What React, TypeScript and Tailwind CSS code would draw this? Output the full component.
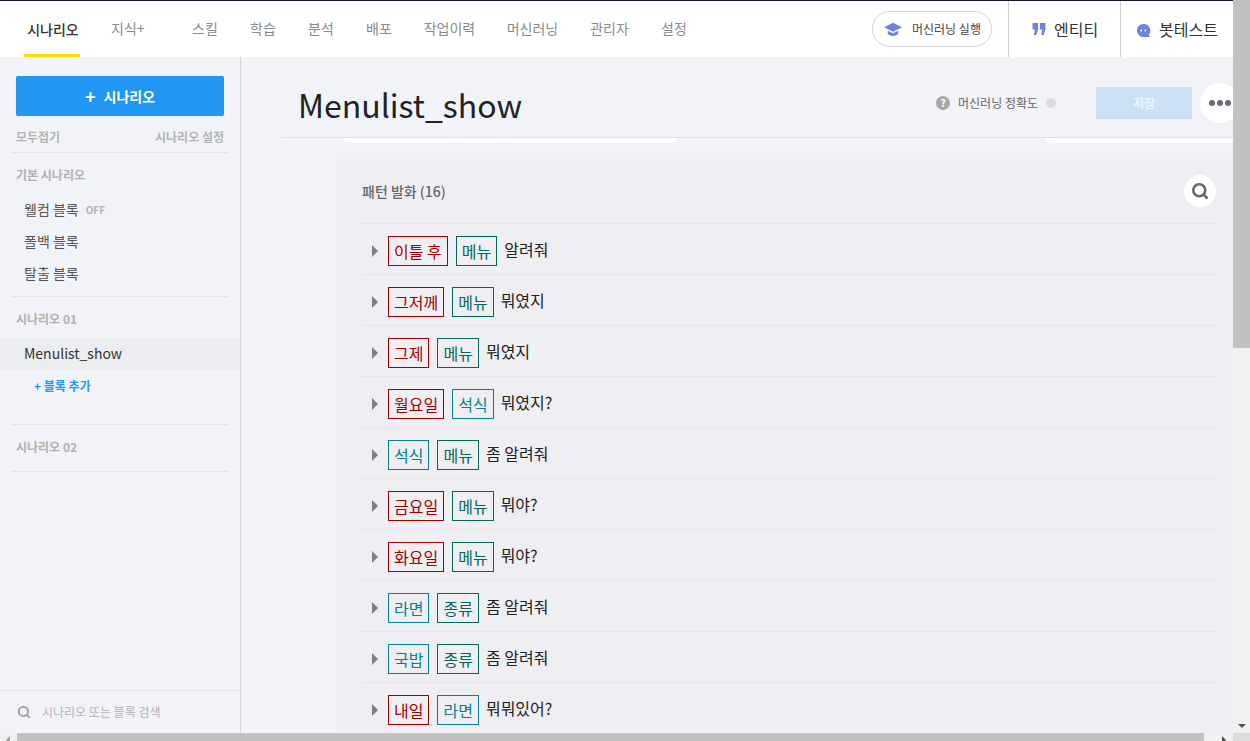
import React from 'react';
import { Search } from 'lucide-react';

const FONT = "font-['Noto_Sans_CJK_KR','Noto_Sans',sans-serif]";

const NAV = [
  { label: '스킬', w: 'w-[58px]' },
  { label: '학습', w: 'w-[58px]' },
  { label: '분석', w: 'w-[58px]' },
  { label: '배포', w: 'w-[58px]' },
  { label: '작업이력', w: 'w-[83px]' },
  { label: '머신러닝', w: 'w-[83px]' },
  { label: '관리자', w: 'w-[71px]' },
  { label: '설정', w: 'w-[58px]' },
];

const RED = 'border-[#a00000] text-[#a00000]';
const GREEN = 'border-[#00695c] text-[#00695c]';
const CYAN = 'border-[#00838f] text-[#00838f]';

type Chip = { text: string; cls: string };

const ROWS: { chips: Chip[]; tail: string }[] = [
  { chips: [{ text: '이틀 후', cls: RED }, { text: '메뉴', cls: GREEN }], tail: '알려줘' },
  { chips: [{ text: '그저께', cls: RED }, { text: '메뉴', cls: GREEN }], tail: '뭐였지' },
  { chips: [{ text: '그제', cls: RED }, { text: '메뉴', cls: GREEN }], tail: '뭐였지' },
  { chips: [{ text: '월요일', cls: RED }, { text: '석식', cls: CYAN }], tail: '뭐였지?' },
  { chips: [{ text: '석식', cls: CYAN }, { text: '메뉴', cls: GREEN }], tail: '좀 알려줘' },
  { chips: [{ text: '금요일', cls: RED }, { text: '메뉴', cls: GREEN }], tail: '뭐야?' },
  { chips: [{ text: '화요일', cls: RED }, { text: '메뉴', cls: GREEN }], tail: '뭐야?' },
  { chips: [{ text: '라면', cls: CYAN }, { text: '종류', cls: GREEN }], tail: '좀 알려줘' },
  { chips: [{ text: '국밥', cls: CYAN }, { text: '종류', cls: GREEN }], tail: '좀 알려줘' },
  { chips: [{ text: '내일', cls: RED }, { text: '라면', cls: CYAN }], tail: '뭐뭐있어?' },
];

const TopBar: React.FC = () => (
  <header className="h-[57px] shrink-0 bg-white border-t border-[#14142a] flex items-stretch">
    <div className="flex items-stretch pl-6">
      <div className="w-[56px] flex items-center justify-center border-b-[3px] border-[#ffdc00] pt-[3px] pl-[2px] text-[14px] font-medium text-[#333333]">시나리오</div>
      <div className="w-[40px] ml-[31px] flex items-center pb-[1px] text-[14px] text-[#8a8a8a]">지식+</div>
    </div>
    <nav className="flex items-center ml-[25px] pb-[1px] text-[14px] text-[#8a8a8a]">
      {NAV.map((item) => (
        <div key={item.label} className={`${item.w} text-center`}>{item.label}</div>
      ))}
    </nav>
    <div className="ml-auto flex items-stretch">
      <div className="flex items-center mr-4">
        <div className="w-[120px] h-[36px] rounded-full border border-[#d4d4d4] flex items-center pl-[11px] gap-[10px] text-[12px] text-[#444444]">
          <svg viewBox="0 0 24 20" className="w-[18px] h-[15px]" fill="#6f82de">
            <path d="M12 1 0 7l12 6 12-6z" />
            <path d="M5 11.5V15c0 1.8 3.2 3.5 7 3.5s7-1.7 7-3.5v-3.500l-7 3.500z" />
          </svg>
          머신러닝 실행
        </div>
      </div>
      <div className="w-[112px] border-l border-[#d0d0d0] flex items-center pl-[23px] gap-2 text-[16px] text-[#333333]">
        <svg viewBox="0 0 14 13" className="w-[14px] h-[12px]" fill="#6f82de">
          <path d="M0 0h6v7l-2 6H1.500L2.500 7H0zM8 0h6v7l-2 6H9.500l1-6H8z" />
        </svg>
        엔티티
      </div>
      <div className="w-[113px] border-l border-[#d0d0d0] flex items-center pl-[15px] gap-2 text-[16px] text-[#333333]">
        <svg viewBox="0 0 16 16" className="w-[15px] h-[15px] mt-[2px]">
          <path d="M8 1a7 7 0 1 0 0 14h7l-1.400-2.400A7 7 0 0 0 8 1z" fill="#6f82de" />
          <circle cx="5.500" cy="8" r="1" fill="#fff" />
          <circle cx="10" cy="8" r="1" fill="#fff" />
        </svg>
        봇테스트
      </div>
    </div>
  </header>
);

const SidebarItem: React.FC<{ children: React.ReactNode }> = ({ children }) => (
  <div className="h-8 pl-6 flex items-center text-[14px] text-[#555555]">{children}</div>
);

const SidebarHeading: React.FC<{ children: React.ReactNode }> = ({ children }) => (
  <div className="pl-4 mt-[12px] text-[12px] font-bold text-[#b0b0b0] leading-[20px]">{children}</div>
);

export default function App() {
  return (
    <div className={`${FONT} h-screen w-full overflow-hidden flex flex-col bg-[#f2f3f8]`}>
      <div className="flex-1 min-h-0 flex">
        <div className="flex-1 min-w-0 flex flex-col overflow-hidden">
          <TopBar />
          <div className="flex-1 min-h-0 flex">
            <aside className="w-[241px] shrink-0 border-r border-[#d5d6dc] flex flex-col">
              <div className="flex-1 min-h-0">
                <div className="px-4 pt-[19px]">
                  <button className="w-full h-10 rounded-[2px] bg-[#2196f3] text-white text-[14px] font-bold flex items-center justify-center gap-2">
                    <span className="text-[18px] font-bold leading-none">+</span>시나리오
                  </button>
                  <div className="flex justify-between mt-[11px] text-[12px] text-[#b4b4b4] font-bold leading-[20px]">
                    <span>모두접기</span>
                    <span>시나리오 설정</span>
                  </div>
                </div>
                <div className="mx-3 mt-[5px] border-b border-[#e3e4ea]" />
                <SidebarHeading>기본 시나리오</SidebarHeading>
                <div className="mt-[8px]">
                  <SidebarItem>
                    웰컴 블록<span className="ml-[7px] text-[10px] font-bold text-[#b4b4b4]">OFF</span>
                  </SidebarItem>
                  <SidebarItem>폴백 블록</SidebarItem>
                  <SidebarItem>탈출 블록</SidebarItem>
                </div>
                <div className="mx-3 mt-[7px] border-b border-[#e3e4ea]" />
                <SidebarHeading>시나리오 01</SidebarHeading>
                <div className="mt-[9px] h-8 pl-6 pb-[2px] flex items-center bg-[#ecedf1] text-[14px] text-[#333333]">Menulist_show</div>
                <div className="pl-[34px] mt-[6px] text-[12px] font-bold text-[#2196f3] leading-[20px]">+ 블록 추가</div>
                <div className="mx-3 mt-[28px] border-b border-[#e3e4ea]" />
                <SidebarHeading>시나리오 02</SidebarHeading>
                <div className="mx-3 mt-[14px] border-b border-[#e3e4ea]" />
              </div>
              <div className="h-[43px] shrink-0 border-t border-[#e3e4ea] pl-[17px] flex items-center gap-[11px] text-[12px] text-[#b4b4b4]">
                <Search className="w-[14px] h-[14px] text-[#9a9a9a]" strokeWidth={3} />
                시나리오 또는 블록 검색
              </div>
            </aside>
            <main className="flex-1 min-w-0 flex flex-col overflow-hidden">
              <div className="h-[81px] shrink-0 ml-10 pt-3 border-b border-[#dfe0e6] flex items-center pl-[17px] overflow-hidden">
                <h1 className="text-[32px] text-[#222222] leading-none pt-[2px]">Menulist_show</h1>
                <div className="ml-auto flex items-center text-[12px] text-[#666666] pb-[1px]">
                  <span className="w-[14px] h-[14px] rounded-full bg-[#a8a8a8] text-white text-[10px] font-bold flex items-center justify-center">?</span>
                  <span className="ml-2">머신러닝 정확도</span>
                  <span className="ml-2 w-[10px] h-[10px] rounded-full bg-[#dcdcdc]" />
                </div>
                <button className="ml-10 w-24 h-8 shrink-0 rounded-[2px] bg-[#cbe0f5] text-white/70 text-[12px] font-bold">저장</button>
                <div className="ml-2 w-10 h-10 shrink-0 -mr-[7px] rounded-full bg-white flex items-center justify-end gap-[2px] pr-[9px]">
                  <span className="w-[6px] h-[6px] rounded-full bg-[#666a75]" />
                  <span className="w-[6px] h-[6px] rounded-full bg-[#666a75]" />
                  <span className="w-[6px] h-[6px] rounded-full bg-[#666a75]" />
                </div>
              </div>
              <div className="h-[5px] shrink-0 flex">
                <div className="ml-[102px] w-[334px] bg-white rounded-b-[16px]" />
                <div className="ml-[368px] w-[190px] bg-white rounded-b-[16px] -mr-2" />
              </div>
              <section className="flex-1 min-h-0 mt-4 ml-24 bg-[#eeeef3] pl-6 pr-[17px] overflow-hidden">
                <div className="h-[65px] border-b border-[#e4e4e9] flex items-center justify-between">
                  <span className="ml-[1px] text-[14px] font-medium text-[#666666]">패턴 발화 (16)</span>
                  <span className="w-8 h-8 rounded-full bg-white flex items-center justify-center">
                    <Search className="w-[18px] h-[18px] text-[#666a75]" strokeWidth={3.5} />
                  </span>
                </div>
                {ROWS.map((row, i) => (
                  <div key={i} className="h-[51px] shrink-0 border-b border-[#e4e4e9] flex items-center pl-[11px] text-[16px]">
                    <span className="w-0 h-0 mt-1 border-y-[6px] border-y-transparent border-l-[6px] border-l-[#808080] mr-[10px]" />
                    {row.chips.map((chip, j) => (
                      <span key={j} className={`h-[30px] mt-1 px-[5px] mr-[8px] border flex items-center ${chip.cls}`}>{chip.text}</span>
                    ))}
                    <span className="-ml-[1px] text-[#222222]">{row.tail}</span>
                  </div>
                ))}
              </section>
            </main>
          </div>
        </div>
        <div className="w-[17px] shrink-0 bg-[#f1f1f1] flex flex-col items-center justify-between">
          <div className="w-full h-[348px] bg-[#c1c1c1]" />
          <span className="w-0 h-0 mb-[5px] border-x-[4px] border-x-transparent border-t-[4px] border-t-[#505050]" />
        </div>
      </div>
      <div className="h-2 shrink-0 flex bg-[#f1f1f1] overflow-hidden">
        <div className="w-[17px] shrink-0 flex items-start pl-[6px] pt-[3px]">
          <span className="w-0 h-0 border-y-[4px] border-y-transparent border-r-[4px] border-r-[#a0a0a0]" />
        </div>
        <div className="w-[1187px] bg-[#c1c1c1]" />
        <div className="w-[29px] flex items-start justify-end pr-[7px] pt-[3px]">
          <span className="w-0 h-0 border-y-[4px] border-y-transparent border-l-[4px] border-l-[#505050]" />
        </div>
        <div className="w-[17px] bg-[#dcdcdc]" />
      </div>
    </div>
  );
}
